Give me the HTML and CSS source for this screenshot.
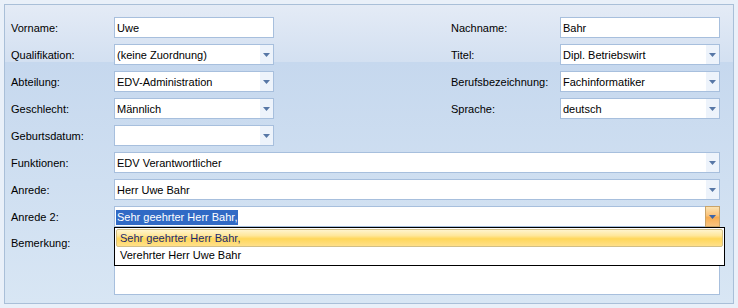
FILE: index.html
```html
<!DOCTYPE html>
<html lang="de">
<head>
<meta charset="utf-8">
<link rel="stylesheet" href="styles.css">
</head>
<body>
<div class="panel">
  <div class="grid">
    <div class="lbl">Vorname:</div>
    <div class="field"><span class="val">Uwe</span></div>
    <div class="spacer"></div>
    <div class="lbl">Nachname:</div>
    <div class="field"><span class="val">Bahr</span></div>

    <div class="lbl">Qualifikation:</div>
    <div class="field combo"><span class="val">(keine Zuordnung)</span><span class="btn"><svg width="7" height="4" viewBox="0 0 7 4"><path d="M0 0H7L3.5 4Z"/></svg></span></div>
    <div class="spacer"></div>
    <div class="lbl">Titel:</div>
    <div class="field combo"><span class="val">Dipl. Betriebswirt</span><span class="btn"><svg width="7" height="4" viewBox="0 0 7 4"><path d="M0 0H7L3.5 4Z"/></svg></span></div>

    <div class="lbl">Abteilung:</div>
    <div class="field combo"><span class="val">EDV-Administration</span><span class="btn"><svg width="7" height="4" viewBox="0 0 7 4"><path d="M0 0H7L3.5 4Z"/></svg></span></div>
    <div class="spacer"></div>
    <div class="lbl">Berufsbezeichnung:</div>
    <div class="field combo"><span class="val">Fachinformatiker</span><span class="btn"><svg width="7" height="4" viewBox="0 0 7 4"><path d="M0 0H7L3.5 4Z"/></svg></span></div>

    <div class="lbl">Geschlecht:</div>
    <div class="field combo"><span class="val">Männlich</span><span class="btn"><svg width="7" height="4" viewBox="0 0 7 4"><path d="M0 0H7L3.5 4Z"/></svg></span></div>
    <div class="spacer"></div>
    <div class="lbl">Sprache:</div>
    <div class="field combo"><span class="val">deutsch</span><span class="btn"><svg width="7" height="4" viewBox="0 0 7 4"><path d="M0 0H7L3.5 4Z"/></svg></span></div>

    <div class="lbl">Geburtsdatum:</div>
    <div class="field combo"><span class="val"></span><span class="btn"><svg width="7" height="4" viewBox="0 0 7 4"><path d="M0 0H7L3.5 4Z"/></svg></span></div>
    <div class="spacer wide"></div>

    <div class="lbl">Funktionen:</div>
    <div class="field combo span"><span class="val">EDV Verantwortlicher</span><span class="btn"><svg width="7" height="4" viewBox="0 0 7 4"><path d="M0 0H7L3.5 4Z"/></svg></span></div>

    <div class="lbl">Anrede:</div>
    <div class="field combo span"><span class="val">Herr Uwe Bahr</span><span class="btn"><svg width="7" height="4" viewBox="0 0 7 4"><path d="M0 0H7L3.5 4Z"/></svg></span></div>

    <div class="lbl">Anrede 2:</div>
    <div class="field combo span open"><span class="val"><span class="sel">Sehr geehrter Herr Bahr,</span></span><span class="btn hot"><svg width="7" height="4" viewBox="0 0 7 4"><path d="M0 0H7L3.5 4Z"/></svg></span>
      <div class="popup">
        <div class="item active">Sehr geehrter Herr Bahr,</div>
        <div class="item">Verehrter Herr Uwe Bahr</div>
      </div>
    </div>

    <div class="lbl top">Bemerkung:</div>
    <div class="field memo span"></div>
  </div>
</div>
</body>
</html>
```
FILE: styles.css
```css
html, body {
  margin: 0;
  padding: 0;
}
body {
  width: 738px;
  height: 308px;
  background: #e9f0f9;
  font-family: "Liberation Sans", Arial, sans-serif;
  font-size: 11px;
  color: #000;
  overflow: hidden;
}
.panel {
  margin: 4px 4px 4px 4px;
  height: 298px;
  border: 1px solid #a9bfd8;
  box-sizing: border-box;
  height: 300px;
  background: linear-gradient(to bottom, #e4ebf6 0, #d3e0f1 19%, #c6d8ee 19%, #d8e6f4 100%);
  padding: 12px 0 0 6px;
}
.grid {
  display: grid;
  grid-template-columns: 103px 160px 177px 109px 160px;
  grid-auto-rows: 21px;
  row-gap: 6px;
}
.grid > .memo {
  height: 62px;
}
.lbl {
  display: flex;
  align-items: center;
  padding-top: 1px;
  white-space: nowrap;
}
.lbl.top {
  align-items: flex-start;
  padding-top: 4px;
}
.spacer.wide {
  grid-column: 3 / 6;
}
.span {
  grid-column: 2 / 6;
}
.field {
  position: relative;
  background: #fff;
  border: 1px solid #a7bfdd;
  box-sizing: border-box;
  display: flex;
  align-items: center;
}
.val {
  flex: 1;
  padding-left: 2px;
  padding-top: 1px;
  white-space: nowrap;
}
.btn {
  width: 13px;
  align-self: stretch;
  background: #edf3fb;
  display: flex;
  align-items: center;
  justify-content: center;
  padding-top: 1px;
}
.btn svg path {
  fill: #5777a6;
}
.btn.hot {
  background: linear-gradient(to bottom, #fce3b1 0, #f9c27a 45%, #f7ad52 55%, #f9c47f 100%);
  border-left: 1px solid #c9a46a;
  margin: -1px -1px -1px 0;
  border-top: 1px solid #c9a46a;
  border-bottom: 1px solid #c9a46a;
  border-right: 1px solid #c9a46a;
}
.btn.hot svg path {
  fill: #3c64a8;
}
.sel {
  background: #316ac5;
  color: #fff;
  padding: 1px 1px 2px 1px;
  margin-left: -1px;
}
.popup {
  position: absolute;
  left: -1px;
  top: 20px;
  width: 611px;
  height: 39px;
  box-sizing: border-box;
  background: #fff;
  border: 1px solid #000;
  padding: 1px;
  display: flex;
  flex-direction: column;
  z-index: 2;
}
.item {
  height: 18px;
  display: flex;
  align-items: center;
  padding-left: 3px;
  box-sizing: border-box;
  border: 1px solid transparent;
}
.item.active {
  background: linear-gradient(to bottom, #fff4cc 0, #ffe79a 35%, #ffd75a 55%, #ffe08a 100%);
  border: 1px solid #d2bf86;
  border-radius: 2px;
  color: #1c2a6e;
}
```
